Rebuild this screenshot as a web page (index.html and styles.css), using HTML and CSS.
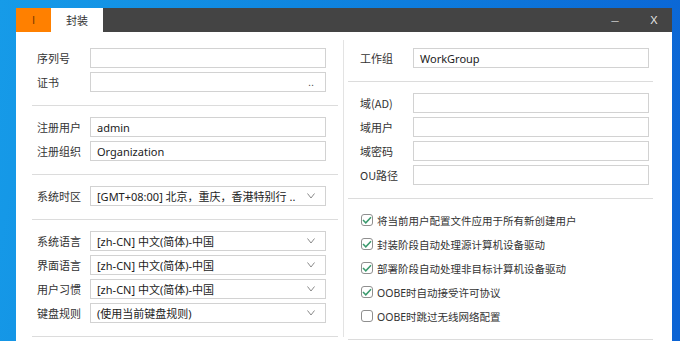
FILE: index.html
```html
<!DOCTYPE html>
<html lang="zh-CN">
<head>
<meta charset="utf-8">
<title>封装</title>
<link rel="stylesheet" href="styles.css">
</head>
<body>
<div class="window">
  <div class="titlebar">
    <div class="logo-tab">I</div>
    <div class="tab">封装</div>
    <div class="title-fill"></div>
    <div class="tbtn min">—</div>
    <div class="tbtn close">X</div>
  </div>
  <div class="content">
    <div class="col col-left">
      <div class="section first">
        <div class="row"><span class="label">序列号</span><div class="field"></div></div>
        <div class="row"><span class="label">证书</span><div class="field browse"><span class="dots">..</span></div></div>
      </div>
      <div class="section">
        <div class="row"><span class="label">注册用户</span><div class="field">admin</div></div>
        <div class="row"><span class="label">注册组织</span><div class="field">Organization</div></div>
      </div>
      <div class="section">
        <div class="row"><span class="label">系统时区</span><div class="field select"><span class="val">[GMT+08:00] 北京，重庆，香港特别行 ..</span><svg class="chev" width="8" height="6" viewBox="0 0 8 6"><polyline points="0.5,0.5 4,5 7.5,0.5" fill="none" stroke="#8a8a8a" stroke-width="1"/></svg></div></div>
      </div>
      <div class="section">
        <div class="row"><span class="label">系统语言</span><div class="field select"><span class="val">[zh-CN] 中文(简体)-中国</span><svg class="chev" width="8" height="6" viewBox="0 0 8 6"><polyline points="0.5,0.5 4,5 7.5,0.5" fill="none" stroke="#8a8a8a" stroke-width="1"/></svg></div></div>
        <div class="row"><span class="label">界面语言</span><div class="field select"><span class="val">[zh-CN] 中文(简体)-中国</span><svg class="chev" width="8" height="6" viewBox="0 0 8 6"><polyline points="0.5,0.5 4,5 7.5,0.5" fill="none" stroke="#8a8a8a" stroke-width="1"/></svg></div></div>
        <div class="row"><span class="label">用户习惯</span><div class="field select"><span class="val">[zh-CN] 中文(简体)-中国</span><svg class="chev" width="8" height="6" viewBox="0 0 8 6"><polyline points="0.5,0.5 4,5 7.5,0.5" fill="none" stroke="#8a8a8a" stroke-width="1"/></svg></div></div>
        <div class="row"><span class="label">键盘规则</span><div class="field select"><span class="val">(使用当前键盘规则)</span><svg class="chev" width="8" height="6" viewBox="0 0 8 6"><polyline points="0.5,0.5 4,5 7.5,0.5" fill="none" stroke="#8a8a8a" stroke-width="1"/></svg></div></div>
      </div>
    </div>
    <div class="col col-right">
      <div class="section first">
        <div class="row"><span class="label">工作组</span><div class="field">WorkGroup</div></div>
      </div>
      <div class="section">
        <div class="row"><span class="label">域(AD)</span><div class="field"></div></div>
        <div class="row"><span class="label">域用户</span><div class="field"></div></div>
        <div class="row"><span class="label">域密码</span><div class="field"></div></div>
        <div class="row"><span class="label">OU路径</span><div class="field"></div></div>
      </div>
      <div class="section checks">
        <div class="check-row"><span class="box on"><svg width="10" height="8" viewBox="0 0 10 8"><polyline points="1,4 3.8,6.8 9,1.2" fill="none" stroke="#3b9a6e" stroke-width="1.5"/></svg></span><span>将当前用户配置文件应用于所有新创建用户</span></div>
        <div class="check-row"><span class="box on"><svg width="10" height="8" viewBox="0 0 10 8"><polyline points="1,4 3.8,6.8 9,1.2" fill="none" stroke="#3b9a6e" stroke-width="1.5"/></svg></span><span>封装阶段自动处理源计算机设备驱动</span></div>
        <div class="check-row"><span class="box on"><svg width="10" height="8" viewBox="0 0 10 8"><polyline points="1,4 3.8,6.8 9,1.2" fill="none" stroke="#3b9a6e" stroke-width="1.5"/></svg></span><span>部署阶段自动处理非目标计算机设备驱动</span></div>
        <div class="check-row"><span class="box on"><svg width="10" height="8" viewBox="0 0 10 8"><polyline points="1,4 3.8,6.8 9,1.2" fill="none" stroke="#3b9a6e" stroke-width="1.5"/></svg></span><span>OOBE时自动接受许可协议</span></div>
        <div class="check-row"><span class="box"></span><span>OOBE时跳过无线网络配置</span></div>
      </div>
    </div>
  </div>
</div>
</body>
</html>
```
FILE: styles.css
```css
* { box-sizing: border-box; }
html, body { margin: 0; height: 341px; overflow: hidden; }
body {
  background: linear-gradient(100deg, #169be8 0%, #0f86e0 40%, #0b63d4 100%);
  padding: 8px 8px 0 16px;
  font-family: "Noto Sans", "Noto Sans CJK SC", sans-serif;
  font-size: 11px;
  color: #333;
}
.window {
  width: 656px;
  height: 340px;
  background: #fff;
}
.titlebar {
  display: flex;
  height: 24px;
  background: #444444;
  align-items: stretch;
}
.logo-tab {
  width: 35px;
  background: #ff8000;
  color: #7a3c00;
  display: flex;
  align-items: center;
  justify-content: center;
  font-family: "Liberation Sans", sans-serif;
  font-size: 11px;
}
.tab {
  width: 52px;
  background: #fff;
  color: #333;
  display: flex;
  align-items: center;
  justify-content: center;
  font-family: "Noto Sans CJK SC", sans-serif;
  font-size: 11px;
}
.title-fill { flex: 1; }
.tbtn {
  color: #e6e6e6;
  display: flex;
  align-items: center;
  justify-content: center;
}
.tbtn.min { font-size: 8px; color: #cfcfcf; width: 42px; padding-right: 12px; }
.tbtn.close { font-family: "Liberation Sans", sans-serif; font-size: 11px; width: 30px; padding-right: 6px; }
.content {
  display: flex;
  align-items: flex-start;
}
.col-left {
  width: 328px;
  padding: 0 5px 0 16px;
  margin-top: 8px;
  border-right: 1px solid #e3e3e3;
}
.col-right {
  flex: 1;
  padding: 0 19px 0 4px;
  margin-top: 8px;
}
.section {
  display: flex;
  flex-direction: column;
  gap: 4px;
  padding: 11px 0 13px;
  border-bottom: 1px solid #dcdcdc;
}
.section.first { padding-top: 8px; }
.col-left .row { padding-left: 5px; }
.col-right .row { padding-left: 12px; }
.row {
  display: flex;
  align-items: center;
  height: 20px;
}
.label {
  width: 53px;
  font-family: "Noto Sans CJK SC", sans-serif;
  font-size: 11px;
  color: #333;
}
.field {
  width: 236px;
  height: 20px;
  border: 1px solid #d2d2d2;
  display: flex;
  align-items: center;
  padding: 0 6px;
  font-size: 11px;
  color: #222;
  white-space: nowrap;
  overflow: hidden;
}
.field.browse { justify-content: flex-end; padding-right: 11px; }
.dots { font-family: "Liberation Sans", sans-serif; font-size: 11px; color: #555; }
.field.select { justify-content: space-between; padding-right: 10px; }
.chev { flex: none; }
.check-row {
  display: flex;
  align-items: center;
  height: 20px;
  padding-left: 13px;
  gap: 4px;
  font-family: "Noto Sans", "Noto Sans CJK SC", sans-serif;
  font-size: 10.5px;
  color: #333;
}
.box {
  width: 12px;
  height: 12px;
  border: 1px solid #8f8f8f;
  border-radius: 3px;
  display: flex;
  align-items: center;
  justify-content: center;
  flex: none;
}
```
